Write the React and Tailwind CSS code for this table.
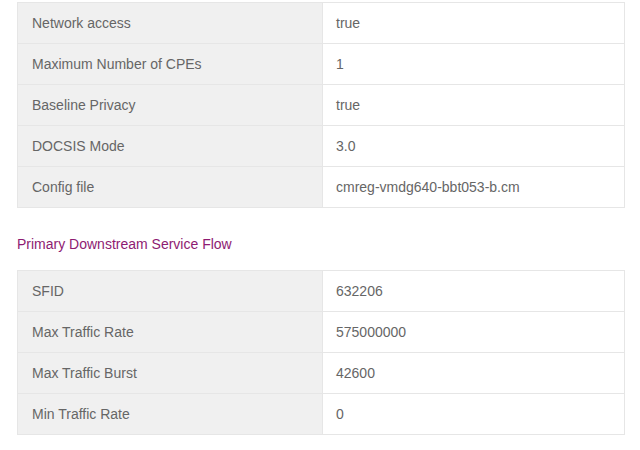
const general = [
  ['Network access', 'true'],
  ['Maximum Number of CPEs', '1'],
  ['Baseline Privacy', 'true'],
  ['DOCSIS Mode', '3.0'],
  ['Config file', 'cmreg-vmdg640-bbt053-b.cm'],
]

const downstream = [
  ['SFID', '632206'],
  ['Max Traffic Rate', '575000000'],
  ['Max Traffic Burst', '42600'],
  ['Min Traffic Rate', '0'],
]

function InfoTable({ rows }) {
  return (
    <table className="w-[608px] border-collapse text-[14px] text-[#666666]">
      <tbody>
        {rows.map(([label, value]) => (
          <tr key={label} className="h-[41px]">
            <td className="w-[305px] border border-[#e6e6e6] bg-[#f0f0f0] px-[14px] align-middle">
              {label}
            </td>
            <td className="border border-[#e6e6e6] bg-white px-[13px] align-middle">{value}</td>
          </tr>
        ))}
      </tbody>
    </table>
  )
}

export default function App() {
  return (
    <div
      className="min-h-[450px] bg-white pl-[17px] pt-[2px]"
      style={{ fontFamily: '"Liberation Sans", Arial, sans-serif' }}
    >
      <InfoTable rows={general} />
      <h3 className="pb-[16px] pt-[27px] text-[14px] leading-[19px] text-[#8e1b72]">
        Primary Downstream Service Flow
      </h3>
      <InfoTable rows={downstream} />
    </div>
  )
}
